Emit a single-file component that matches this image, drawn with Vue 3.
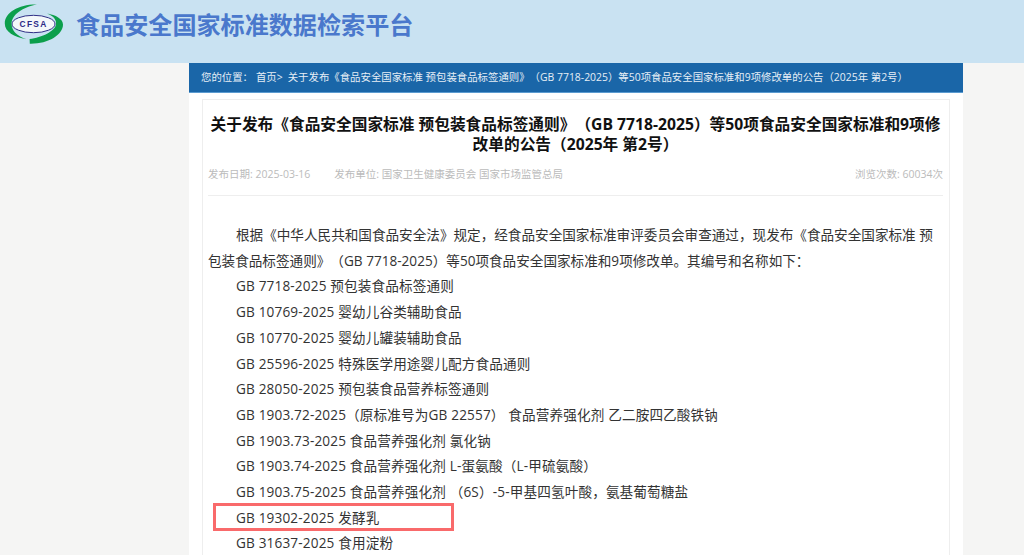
<script setup>
const items = [
  'GB 7718-2025 预包装食品标签通则',
  'GB 10769-2025 婴幼儿谷类辅助食品',
  'GB 10770-2025 婴幼儿罐装辅助食品',
  'GB 25596-2025 特殊医学用途婴儿配方食品通则',
  'GB 28050-2025 预包装食品营养标签通则',
  'GB 1903.72-2025（原标准号为GB 22557） 食品营养强化剂 乙二胺四乙酸铁钠',
  'GB 1903.73-2025 食品营养强化剂 氯化钠',
  'GB 1903.74-2025 食品营养强化剂 L-蛋氨酸（L-甲硫氨酸）',
  'GB 1903.75-2025 食品营养强化剂 （6S）-5-甲基四氢叶酸，氨基葡萄糖盐',
  'GB 19302-2025 发酵乳',
  'GB 31637-2025 食用淀粉'
]
</script>

<template>
  <div class="page">
    <header class="top">
      <div class="logo">
        <svg width="60" height="42" viewBox="0 0 60 42" class="logo-svg">
          <ellipse cx="29.5" cy="20" rx="21.5" ry="8.7" fill="#f4f8fa" stroke="#2f2f86" stroke-width="1" />
          <path d="M33 .6C15 .2 .8 8.5 .8 19.6C.8 27.8 10 33.4 22.5 35.2C13 32.2 7.6 26.8 7.6 20C7.6 11 18 3.4 33 .6Z" fill="#0c9f4c" />
          <path d="M43 9.6C51 12.4 52.4 17 52 20.4C51 27 38 33.4 25.6 35L25.8 39.8C44 40.2 59 31 59 20.6C59 15 51.6 11 43 9.6Z" fill="#0c9f4c" />
          <text x="29.6" y="23.2" text-anchor="middle" class="logo-text">CFSA</text>
        </svg>
      </div>
      <h1 class="site-title">食品安全国家标准数据检索平台</h1>
    </header>

    <main class="column">
      <nav class="crumb">
        <span>您的位置：</span>
        <span>首页&gt;</span>
        <span>关于发布《食品安全国家标准 预包装食品标签通则》（GB 7718-2025）等50项食品安全国家标准和9项修改单的公告（2025年 第2号）</span>
      </nav>

      <article class="card">
        <h2 class="title">关于发布《食品安全国家标准 预包装食品标签通则》（GB 7718-2025）等50项食品安全国家标准和9项修改单的公告（2025年 第2号）</h2>
        <div class="meta">
          <div class="meta-left">
            <span>发布日期: 2025-03-16</span>
            <span>发布单位: 国家卫生健康委员会 国家市场监管总局</span>
          </div>
          <span>浏览次数: 60034次</span>
        </div>
        <div class="body">
          <p>根据《中华人民共和国食品安全法》规定，经食品安全国家标准审评委员会审查通过，现发布《食品安全国家标准 预包装食品标签通则》（GB 7718-2025）等50项食品安全国家标准和9项修改单。其编号和名称如下：</p>
          <p v-for="item in items" :key="item" class="row">{{ item }}</p>
          <div class="mark"></div>
        </div>
      </article>
    </main>
  </div>
</template>

<style>
html, body { margin: 0; background: #f5f5f4; overflow: hidden; }
</style>

<style scoped>
.page {
  height: 555px;
  overflow: hidden;
  font-family: "Open Sans", "Noto Sans CJK SC", sans-serif;
  text-spacing-trim: space-all;
}
.top {
  height: 63px;
  background: #c9e2f2;
  display: flex;
  align-items: flex-start;
}
.logo { padding: 4px 0 0 4px; line-height: 0; }
.logo-text {
  font-family: "Liberation Sans", sans-serif;
  font-size: 8.4px;
  font-weight: 700;
  letter-spacing: 1.3px;
  fill: #2b2a86;
}
.site-title {
  margin: 10px 0 0 12px;
  font-size: 24.1px;
  line-height: 30px;
  font-weight: 700;
  color: #4a78cc;
}
.column {
  width: 774px;
  margin-left: 189px;
  background: #fff;
  height: 492px;
}
.crumb {
  height: 30px;
  padding-left: 12px;
  box-sizing: border-box;
  background: #1a66a8;
  border-bottom: 1px solid #5b9bd0;
  color: #e6eef6;
  font-size: 10.4px;
  line-height: 29px;
  white-space: nowrap;
  display: flex;
  gap: 3px;
}
.crumb span:last-child { margin-left: 2px; letter-spacing: .01px; }
.card {
  margin: 6px 13px 0;
  padding: 0 6px 0 5px;
  border: 1px solid #eee;
  height: 600px;
}
.title {
  margin: 0;
  padding-top: 14px;
  font-size: 15.7px;
  line-height: 20px;
  font-weight: 700;
  color: #111;
  text-align: center;
}
.meta {
  margin-top: 12px;
  height: 24px;
  padding-bottom: 5px;
  border-bottom: 1px solid #eee;
  display: flex;
  justify-content: space-between;
  font-size: 10.5px;
  line-height: 16px;
  color: #bbb;
}
.meta-left { display: flex; gap: 24px; }
.body {
  position: relative;
  padding-top: 26px;
  font-size: 13.6px;
  line-height: 25.7px;
  color: #333;
}
.body p {
  margin: 0;
  text-indent: 28px;
}
.body .row { letter-spacing: .15px; }
.mark {
  position: absolute;
  left: 5px;
  top: 307px;
  width: 241px;
  height: 28px;
  box-sizing: border-box;
  border: 3px solid #f96a6b;
}
</style>
